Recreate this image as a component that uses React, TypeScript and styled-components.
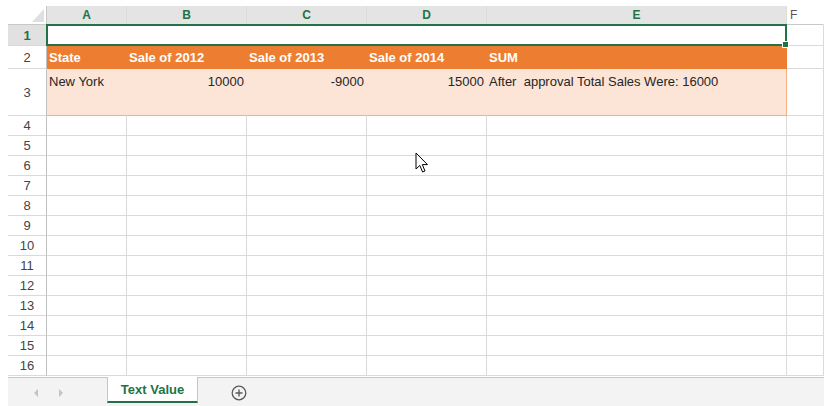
import styled, { createGlobalStyle } from "styled-components";

const GlobalStyle = createGlobalStyle`
  html, body {
    margin: 0;
    padding: 0;
    background: #ffffff;
  }
  body {
    font-family: "Liberation Sans", Arial, sans-serif;
  }
`;

const GREEN = "#217346";
const GRID_LINE = "#dadada";

const Page = styled.div`
  position: relative;
  width: 824px;
  height: 406px;
  padding: 6px 0 0 8px;
  box-sizing: border-box;
  overflow: hidden;
  display: flex;
  flex-direction: column;
`;

const Sheet = styled.div`
  display: grid;
  grid-template-columns: 39px 80px 120px 120px 120px 300px 1fr;
  grid-template-rows: 19px 21px 23px 47px repeat(13, 20px);
  font-size: 13px;
  color: #222;
`;

const Corner = styled.div`
  position: relative;
  border-bottom: 1px solid #c8c8c8;
  border-right: 1px solid #c8c8c8;
  box-sizing: border-box;

  &::after {
    content: "";
    position: absolute;
    right: 2px;
    bottom: 2px;
    width: 0;
    height: 0;
    border-left: 12px solid transparent;
    border-bottom: 13px solid #dfdfdf;
  }
`;

const ColHeader = styled.div<{ $active?: boolean }>`
  display: flex;
  align-items: center;
  justify-content: ${(p) => (p.$active ? "center" : "flex-start")};
  padding-left: ${(p) => (p.$active ? "0" : "3px")};
  box-sizing: border-box;
  background: ${(p) => (p.$active ? "#e4e4e4" : "#ffffff")};
  color: ${(p) => (p.$active ? GREEN : "#555")};
  font-weight: ${(p) => (p.$active ? 700 : 400)};
  font-size: 12px;
  border-bottom: 1px solid #c8c8c8;
  border-right: 1px solid ${(p) => (p.$active ? "#dcdcdc" : "transparent")};
`;

const RowHeader = styled.div<{ $active?: boolean }>`
  display: flex;
  align-items: center;
  justify-content: center;
  box-sizing: border-box;
  background: ${(p) => (p.$active ? "#e1e1e1" : "#ffffff")};
  color: ${(p) => (p.$active ? GREEN : "#444")};
  font-weight: ${(p) => (p.$active ? 700 : 400)};
  font-size: 13px;
  border-bottom: 1px solid ${GRID_LINE};
  border-right: 1px solid #c0c0c0;
`;

type CellKind = "plain" | "head" | "data";

const Cell = styled.div<{ $kind?: CellKind; $align?: "left" | "right"; $last?: boolean }>`
  display: flex;
  align-items: ${(p) => (p.$kind === "data" ? "flex-start" : "center")};
  justify-content: ${(p) => (p.$align === "right" ? "flex-end" : "flex-start")};
  padding: ${(p) => (p.$kind === "data" ? "5px 2px 0 2px" : "0 2px")};
  box-sizing: border-box;
  white-space: nowrap;
  overflow: visible;
  background: ${(p) =>
    p.$kind === "head" ? "#ed7d31" : p.$kind === "data" ? "#fce4d6" : "#ffffff"};
  color: ${(p) => (p.$kind === "head" ? "#ffffff" : "#262626")};
  font-weight: ${(p) => (p.$kind === "head" ? 700 : 400)};
  border-bottom: 1px solid
    ${(p) => (p.$kind === "head" ? "#ed7d31" : p.$kind === "data" ? "#f4b084" : GRID_LINE)};
  border-right: 1px solid
    ${(p) =>
      p.$kind === "head"
        ? "#ed7d31"
        : p.$kind === "data"
        ? p.$last
          ? "#f4b084"
          : "#fce4d6"
        : GRID_LINE};
`;

const Selection = styled.div`
  grid-column: 2 / 7;
  position: relative;
  border: 2px solid ${GREEN};
  margin: -1px 0 0 -1px;
  background: #ffffff;
`;

const FillHandle = styled.span`
  position: absolute;
  right: -4px;
  bottom: -4px;
  width: 5px;
  height: 5px;
  background: ${GREEN};
  border: 1px solid #ffffff;
`;

const TabBar = styled.div`
  display: flex;
  height: 30px;
  background: #f3f3f3;
  margin-top: 1px;
`;

const NavArea = styled.div`
  width: 99px;
  display: flex;
  align-items: center;
  gap: 21px;
  padding-left: 26px;
  box-sizing: border-box;
  border-top: 1px solid #c6c6c6;
`;

const NavArrow = styled.span<{ $dir: "left" | "right" }>`
  width: 0;
  height: 0;
  margin-top: 2px;
  border-top: 4px solid transparent;
  border-bottom: 4px solid transparent;
  ${(p) =>
    p.$dir === "left"
      ? "border-right: 4px solid #c4c4c4;"
      : "border-left: 4px solid #c4c4c4;"}
`;

const Tab = styled.div`
  width: 91px;
  height: 26px;
  display: flex;
  align-items: center;
  justify-content: center;
  box-sizing: border-box;
  background: #ffffff;
  border-left: 1px solid #c6c6c6;
  border-right: 1px solid #c6c6c6;
  border-bottom: 2px solid ${GREEN};
  color: ${GREEN};
  font-weight: 700;
  font-size: 13px;
  padding-top: 1px;
`;

const TabRest = styled.div`
  flex: 1;
  display: flex;
  align-items: center;
  padding-left: 33px;
  border-top: 1px solid #c6c6c6;
`;

const AddButton = styled.span`
  display: flex;
  margin-top: 1px;
`;

const Cursor = styled.svg`
  position: absolute;
  left: 415px;
  top: 152px;
`;

const rowsBelow = Array.from({ length: 13 }, (_, i) => i + 4);

export default function App() {
  return (
    <>
      <GlobalStyle />
      <Page>
        <Sheet>
          <Corner />
          {["A", "B", "C", "D", "E"].map((c) => (
            <ColHeader key={c} $active>
              {c}
            </ColHeader>
          ))}
          <ColHeader>F</ColHeader>

          <RowHeader $active>1</RowHeader>
          <Selection>
            <FillHandle />
          </Selection>
          <Cell />

          <RowHeader>2</RowHeader>
          <Cell $kind="head">State</Cell>
          <Cell $kind="head">Sale of 2012</Cell>
          <Cell $kind="head">Sale of 2013</Cell>
          <Cell $kind="head">Sale of 2014</Cell>
          <Cell $kind="head">SUM</Cell>
          <Cell />

          <RowHeader>3</RowHeader>
          <Cell $kind="data">New York</Cell>
          <Cell $kind="data" $align="right">
            10000
          </Cell>
          <Cell $kind="data" $align="right">
            -9000
          </Cell>
          <Cell $kind="data" $align="right">
            15000
          </Cell>
          <Cell $kind="data" $last>
            After&nbsp; approval Total Sales Were: 16000
          </Cell>
          <Cell />

          {rowsBelow.map((r) => [
            <RowHeader key={`h${r}`}>{r}</RowHeader>,
            ...[0, 1, 2, 3, 4, 5].map((c) => <Cell key={`${r}-${c}`} />),
          ])}
        </Sheet>

        <TabBar>
          <NavArea>
            <NavArrow $dir="left" />
            <NavArrow $dir="right" />
          </NavArea>
          <Tab>Text Value</Tab>
          <TabRest>
            <AddButton>
              <svg width="16" height="16" viewBox="0 0 16 16">
                <circle cx="8" cy="8" r="6.8" fill="none" stroke="#5a5a5a" strokeWidth="1.3" />
                <path d="M8 4.5v7M4.5 8h7" stroke="#5a5a5a" strokeWidth="1.4" />
              </svg>
            </AddButton>
          </TabRest>
        </TabBar>

        <Cursor width="14" height="22" viewBox="0 0 14 22">
          <path
            d="M1 1 L1 17 L4.8 13.4 L7.6 20 L10 19 L7.3 12.6 L12.5 12.6 Z"
            fill="#ffffff"
            stroke="#000000"
            strokeWidth="1"
            strokeLinejoin="round"
          />
        </Cursor>
      </Page>
    </>
  );
}
